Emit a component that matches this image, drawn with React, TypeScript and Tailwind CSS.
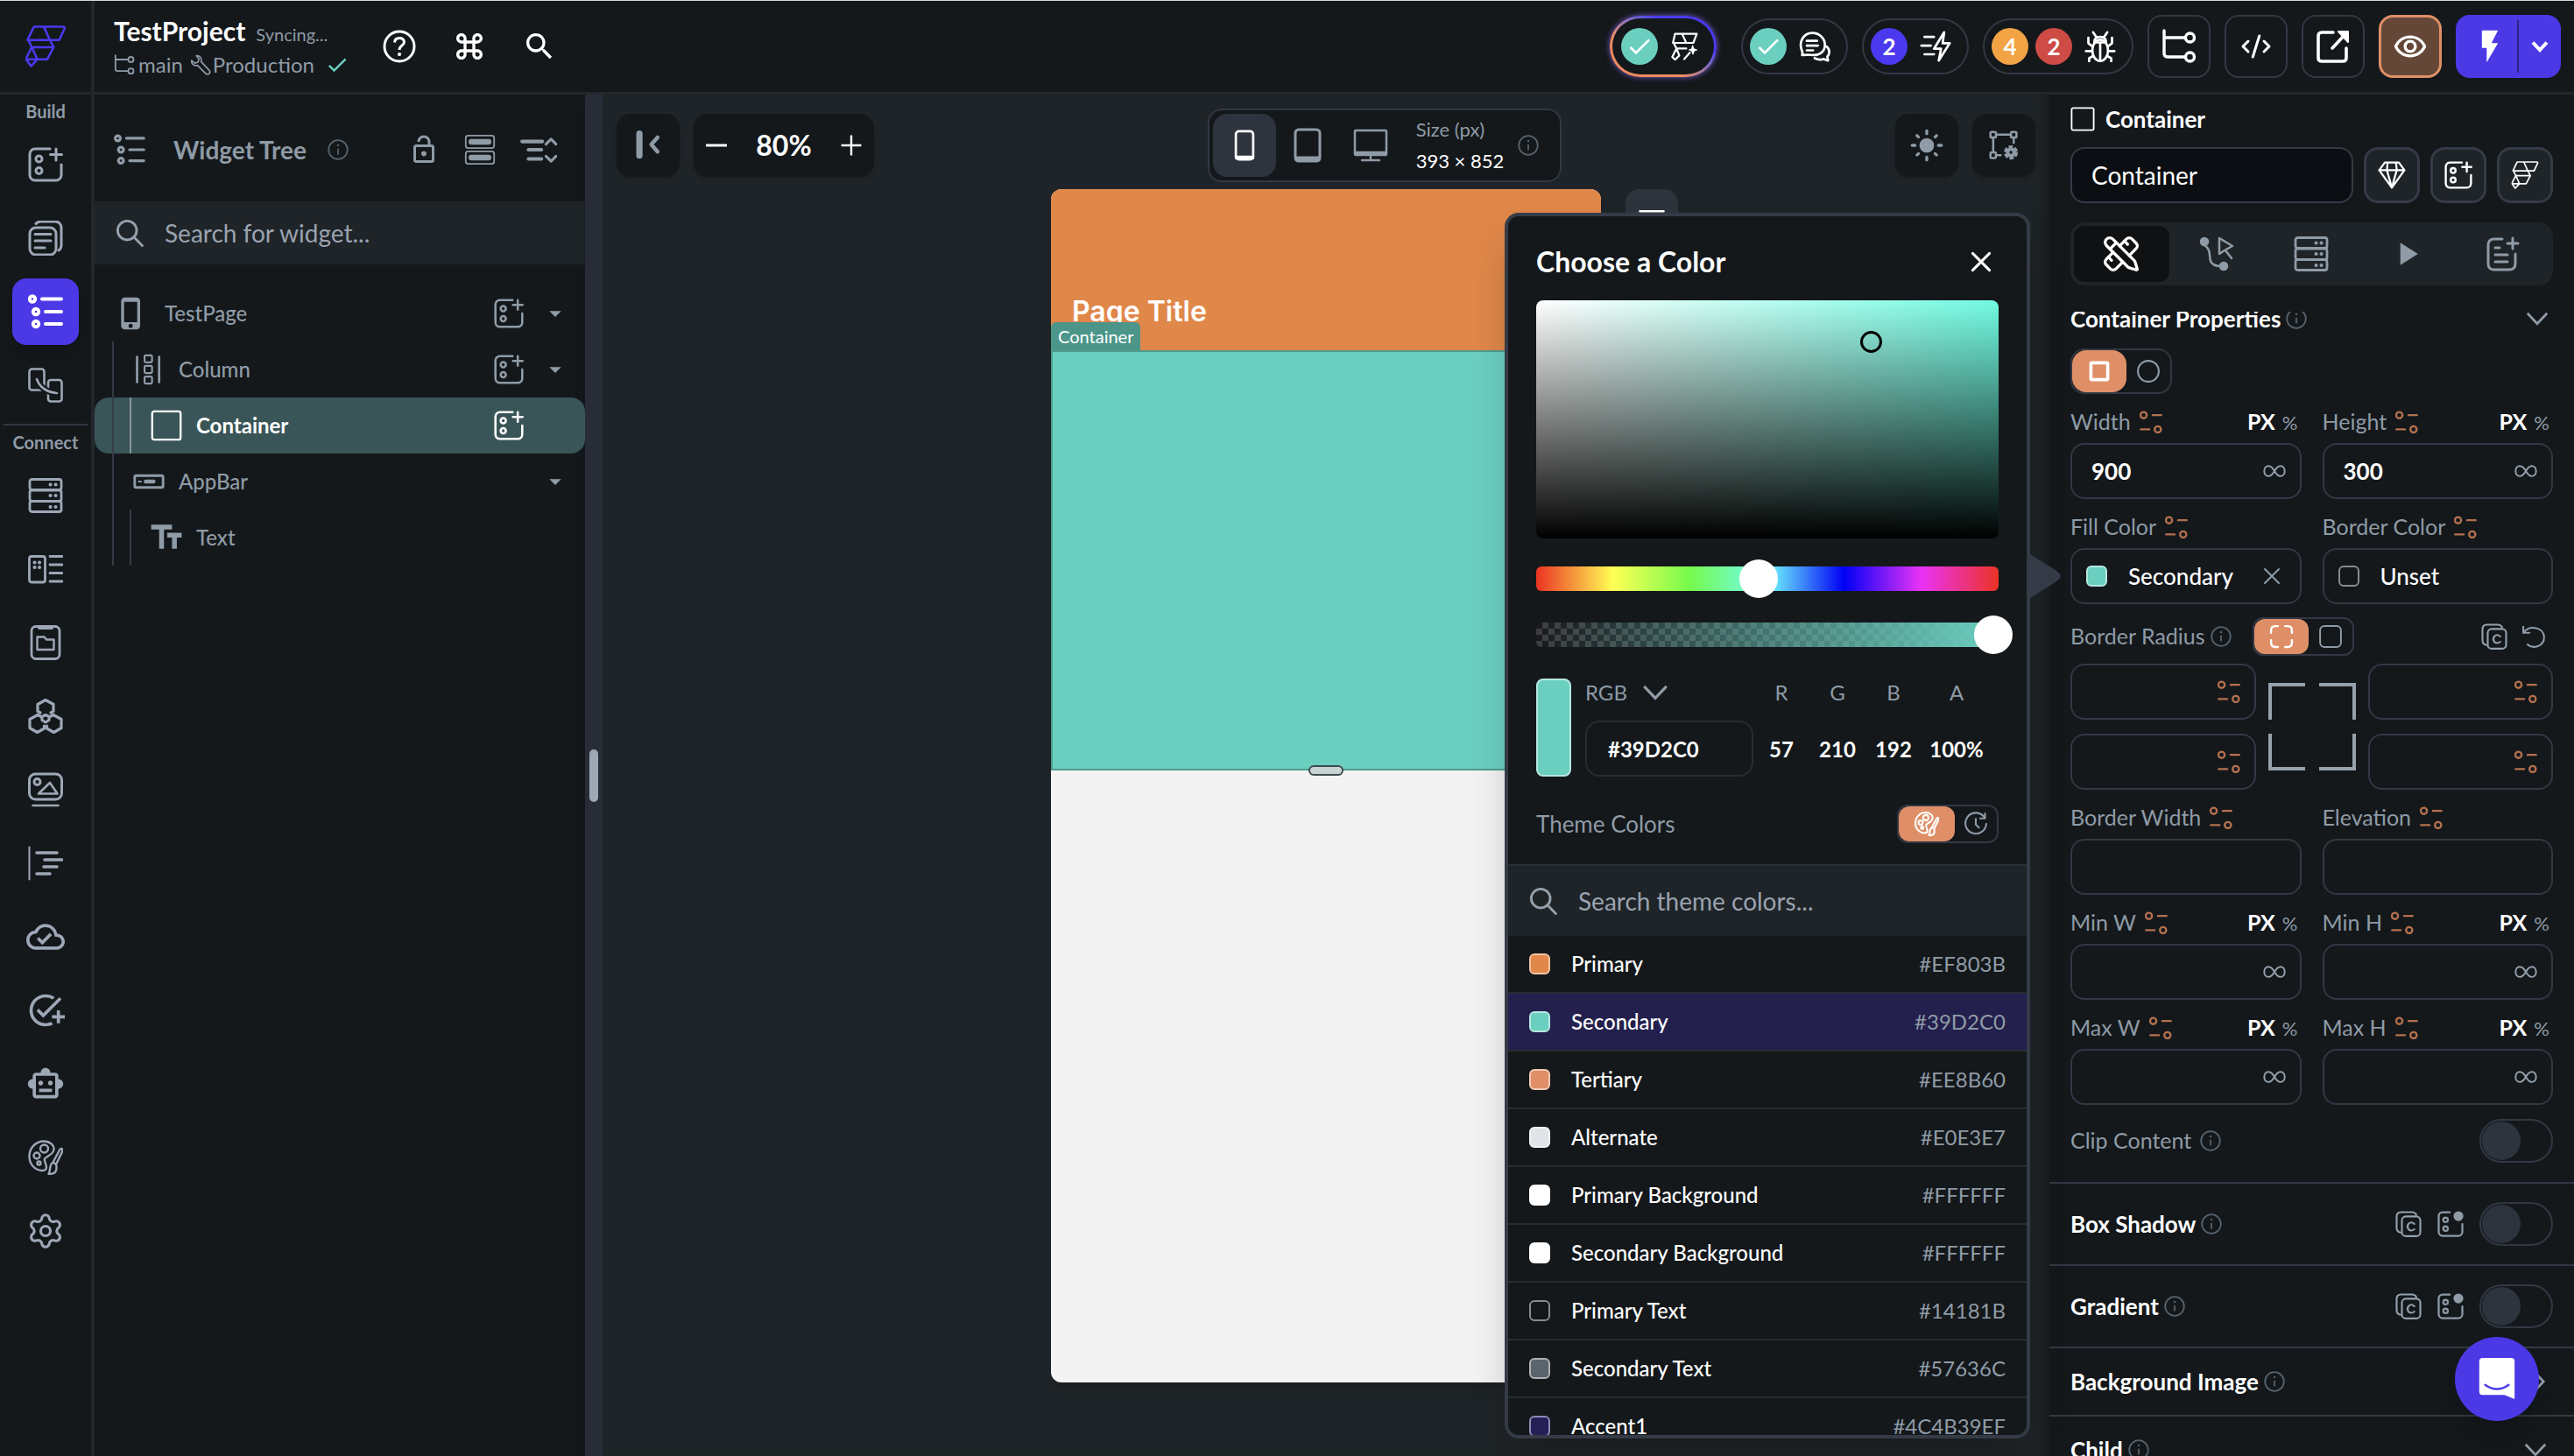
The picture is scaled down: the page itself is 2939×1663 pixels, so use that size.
import type { ReactNode } from "react";
import { CodeXml, PencilRuler, Settings } from "lucide-react";
import {
    MdArrowDropDown,
    MdCheck,
    MdFlashOn,
    MdKeyboardCommandKey,
    MdLightMode,
    MdOutlineAddTask,
    MdOutlineCloudDone,
    MdOutlineLockOpen,
    MdOutlineRemoveRedEye,
    MdOutlineSmartToy,
    MdPhoneIphone,
    MdPlayArrow,
    MdSearch,
    MdTextFields,
} from "react-icons/md";

type IconProps = { className?: string; width?: number };

// Base for the line icons, all drawn on a 40x40 grid
const Icon = ({ className = "size-10", width = 3, children }: IconProps & { children: ReactNode }) => (
    <svg viewBox="0 0 40 40" className={`shrink-0 ${className}`} fill="none" stroke="currentColor" strokeWidth={width} strokeLinecap="round" strokeLinejoin="round" aria-hidden="true">
        {children}
    </svg>
);

const Logo = ({ className = "size-12" }: IconProps) => (
    <svg viewBox="0 0 48 49" className={`shrink-0 ${className}`} fill="none" stroke="currentColor" strokeWidth={2.6} strokeLinejoin="round" aria-hidden="true">
        <path d="M10.5 1.5H44q3 0 2 2.5L40 17H3zM22 1.5 29 17M4 17l4 8.5h25.5L26 39.5H1.5L7 47.5l7.5-8-6.500-14L1.500 38M29 17l4.500 8.500" />
    </svg>
);

const AddWidgetIcon = ({ className }: IconProps) => (
    <Icon className={className}>
        <path d="M25 2H8a6 6 0 0 0-6 6v24a6 6 0 0 0 6 6h24a6 6 0 0 0 6-6V20M32 2v13M25.5 8.5h13" />
        <circle cx="12.5" cy="13.5" r="3.5" />
        <circle cx="12.5" cy="27" r="3.5" />
    </Icon>
);

const WidgetDotIcon = ({ className }: IconProps) => (
    <Icon className={className}>
        <path d="M19 2H8a6 6 0 0 0-6 6v24a6 6 0 0 0 6 6h24a6 6 0 0 0 6-6V20" />
        <circle cx="12.5" cy="13.5" r="3.5" />
        <circle cx="12.5" cy="27" r="3.5" />
        <circle cx="32" cy="8" r="6" fill="currentColor" />
    </Icon>
);

const PagesIcon = () => (
    <Icon>
        <rect x="2" y="8" width="30" height="31" rx="7" />
        <path d="M8 15.5h18M8 23h18M8 31h11M9 3.5Q11 1 15 1h16a7 7 0 0 1 7 7v20q0 4-3 6" />
    </Icon>
);

const TreeIcon = ({ className, width = 4 }: IconProps) => (
    <Icon className={className} width={width}>
        <circle cx="5" cy="5.5" r="3.2" />
        <circle cx="9" cy="20" r="3.2" />
        <circle cx="9" cy="34" r="3.2" />
        <path d="M16 5.5h22M20 20h18M20 34h18" />
    </Icon>
);

const StoryboardIcon = () => (
    <Icon width={2.6}>
        <rect x="1.5" y="1.5" width="17" height="24" rx="3" />
        <rect x="23" y="14" width="15.5" height="24.5" rx="3" />
        <path d="M10 13C14 24 22 28 33 29" className="stroke-[#14181b]" strokeWidth={7} />
        <path d="M10 13C14 24 22 28 33 29" />
    </Icon>
);

const DatabaseIcon = ({ className, width = 2.8 }: IconProps) => (
    <Icon className={className} width={width}>
        <rect x="2" y="1.5" width="36" height="12" rx="2.5" />
        <rect x="2" y="14" width="36" height="12.5" rx="2.5" />
        <rect x="2" y="26.5" width="36" height="12" rx="2.5" />
        <path d="M25.5 7.5h.1M31.5 7.5h.1M25.5 20h.1M31.5 20h.1M25.5 33h.1M31.5 33h.1" strokeWidth={4} />
    </Icon>
);

const DataTypesIcon = () => (
    <Icon width={2.8}>
        <rect x="1.5" y="5.5" width="18" height="29.5" rx="2.5" />
        <path d="M25 5.5h14M25 15h14M25 24.5h14M25 34h14" />
        <path d="M7.5 12.5h.1M13 12.5h.1M7.5 18h.1M13 18h.1" strokeWidth={4} />
    </Icon>
);

const StateIcon = () => (
    <Icon width={2.8}>
        <rect x="4" y="1.5" width="32" height="37" rx="5" />
        <path d="M13 3h14" strokeWidth={4} />
        <path d="M10.5 13.5h8l2.5 3h8.5v11.5h-19z" strokeWidth={2.4} />
    </Icon>
);

const HexIcon = () => (
    <Icon width={3.2}>
        <path d="M14 16 11 14.5V6.5L20 1.5l9 5v8L26 16M15 20.5l-4-2-9 5v10l8.500 5 8-4.500v-3M25 20.5l4-2 9 5v10l-8.500 5-8-4.500v-3" />
        <path d="m20 18.5 4 2v4L20 27l-4-2.500v-4z" />
    </Icon>
);

const MediaIcon = () => (
    <Icon>
        <rect x="1.5" y="2" width="37" height="29" rx="7" />
        <circle cx="10.5" cy="11" r="3.5" />
        <path d="M12 24.500 25 12l8.500 12.500zM5.500 38h29" strokeWidth={2.6} />
    </Icon>
);

const AutomationIcon = () => (
    <Icon>
        <path d="M1.5 1.5v37" strokeWidth={2} />
        <path d="M10 8h23M19 16h19.5M18 24h15M10 32h15" strokeWidth={3.6} />
    </Icon>
);

const PaletteIcon = ({ className, width = 2.4 }: IconProps) => (
    <Icon className={className} width={width}>
        <path d="M20 34C11 38 2 29 1.5 20 1 9 9 1.5 18 1.5c7 0 12 4.500 11.500 9.500-.500 6-8 7-10.500 10.500-1.500 3 4.500 9 1 12.500zM39 10.500q-1-1.500-3 1l-7.500 14 3.500 2.500 7-14.500q.600-1.500 0-3zM28 26c-4 2-2 9-4.500 13 5 0 9-2 9-6.500q0-4-.500-4.500" />
        <circle cx="18.5" cy="10" r="4.5" />
        <circle cx="10" cy="18" r="3.5" />
        <circle cx="12.5" cy="26.5" r="2" />
    </Icon>
);

const InfoIcon = ({ className = "" }: IconProps) => (
    <Icon className={`size-6 text-[#57636c] ${className}`}>
        <circle cx="20" cy="20" r="18" />
        <path d="M20 18v11" strokeLinecap="butt" />
        <path d="M20 11.5h.1" strokeWidth={4} />
    </Icon>
);

const ChevronDown = ({ className = "size-8", width = 4 }: IconProps) => (
    <Icon className={className} width={width}>
        <path d="m4 11 16 17L36 11" strokeLinecap="butt" strokeLinejoin="miter" />
    </Icon>
);

const ChevronRight = ({ className = "size-8", width = 4 }: IconProps) => (
    <Icon className={className} width={width}>
        <path d="m18 4 15 16-15 16" strokeLinecap="butt" strokeLinejoin="miter" />
    </Icon>
);

const CloseIcon = ({ className = "size-6", width = 4 }: IconProps) => (
    <Icon className={className} width={width}>
        <path d="M4 4l32 32M36 4 4 36" />
    </Icon>
);

const SearchIcon = ({ className = "size-8" }: IconProps) => (
    <Icon className={className} width={3.6}>
        <circle cx="16.5" cy="16.5" r="13.5" />
        <path d="m27 27 11 11" />
    </Icon>
);

const BranchIcon = ({ className, width = 3 }: IconProps) => (
    <Icon className={className} width={width}>
        <path d="M3 2v26q0 4 4 4h20M3 10h24" />
        <circle cx="32.5" cy="10" r="5" />
        <circle cx="32.5" cy="32" r="5" />
    </Icon>
);

const SquareIcon = ({ className }: IconProps) => (
    <Icon className={className} width={2.6}>
        <rect x="2" y="2" width="36" height="36" rx="2.5" />
    </Icon>
);

// Marks a property that can be bound to a variable
const BindIcon = () => (
    <Icon className="size-[26px] text-[#b4714f]" width={3.6}>
        <circle cx="7" cy="8" r="5.5" />
        <circle cx="32" cy="33" r="5.5" />
        <path d="M23 8h15M2 33h15" />
    </Icon>
);

const InfinityIcon = () => (
    <Icon className="size-[26px] text-[#95a1ac]">
        <path d="M20 20c-4-7-7-9-10.500-9C5 11 2 15 2 20s3 9 7.500 9c3.500 0 6.500-2 10.500-9s7-9 10.500-9C35 11 38 15 38 20s-3 9-7.500 9c-3.500 0-6.500-2-10.500-9z" />
    </Icon>
);

const CopyIcon = () => (
    <Icon className="size-[30px] text-[#95a1ac]" width={2.8}>
        <rect x="10" y="8.5" width="28" height="30" rx="6" />
        <path d="M8 33q-6-1-6-7V9q0-7 7-7h16q5 0 7 4M29 20q-5-4.500-9 0-3 4 0 8 4 4 9 0" />
    </Icon>
);

const GemIcon = () => (
    <Icon className="size-8" width={2.8}>
        <path d="M10 2h20l8 11-18 25L2 13zM2 13h36M14 2l-1 11 7 25 7-25-1-11" />
    </Icon>
);

const WandIcon = () => (
    <Icon className="size-8" width={2.8}>
        <path d="M7 2h31l-5 13H4zM17 2l6 13M5 15l4 8h14M9 23 3 35l4 4 6-6zM20 38l8-9" />
        <path d="m32 19 1.500 4.500L38 25l-4 1.500L32.500 31 31 26.500 27 25l4-1.500z" fill="currentColor" strokeWidth={1.5} />
    </Icon>
);

const ChatIcon = () => (
    <Icon className="size-9" width={3}>
        <path d="M4 31q1-3 0-5C-1 14 6 3 17 3c9 0 16 7 16 15 0 9-7 13-14 13-4 0-6-1-15 0zM10 13h13M10 19h14M10 25h8M35 20c5 4 4 10 1 13l1 5-6-2q-5 2-11-1" />
    </Icon>
);

const ActionIcon = () => (
    <Icon className="size-9" width={3}>
        <path d="M31 2 18 23h9l-3 15 14-22h-9zM6 8h12M2 19h12M6 30h12" />
    </Icon>
);

const BugIcon = () => (
    <Icon className="size-9" width={3}>
        <ellipse cx="20" cy="25" rx="10" ry="13.5" />
        <path d="M12.500 15q0-7 7.500-7t7.500 7zM20 15v23M15 8l-4-6M25 8l4-6M10 20l-5-4V9M30 20l5-4V9M10 26H2M30 26h8M11.500 32 6 35v4M28.500 32l5.500 3v4" />
    </Icon>
);

const OpenIcon = () => (
    <Icon className="size-10" width={3.6}>
        <path d="M20 4H7q-4 0-4 4v25q0 4 4 4h24q4 0 4-4V22M19 22 34 6" />
        <path d="M26 3h11v12z" fill="currentColor" strokeWidth={2} />
    </Icon>
);

const HelpIcon = () => (
    <Icon className="size-10">
        <circle cx="20" cy="20" r="17" />
        <path d="M14.500 15.500q.500-5 5.500-5t5.500 4.500c0 4-5.500 4-5.500 9" strokeLinecap="butt" />
        <path d="M20 29h.1" strokeWidth={4} />
    </Icon>
);

const muted = "text-[#8f9ba6]";
const fieldBox = "flex h-16 w-full min-w-0 items-center rounded-2xl border-2 border-[#323843]";

const Header = () => (
    <header className="flex h-[108px] shrink-0 items-stretch border-t border-b-[3px] border-t-[#cfdcda] border-b-[#22272b]">
        <div className="flex w-[108px] shrink-0 items-center justify-center border-r-4 border-[#22272b] text-[#4b39ef]">
            <Logo />
        </div>
        <div className="flex flex-1 items-center pl-5.5">
            <div className="flex w-[306px] flex-col gap-1">
                <div className="flex items-baseline gap-3">
                    <h1 className="text-[30px] leading-9 font-bold">TestProject</h1>
                    <span className={`text-[20px] ${muted}`}>Syncing...</span>
                </div>
                <div className={`flex items-center text-[24px] leading-8 ${muted}`}>
                    <BranchIcon className="mr-1 size-6" />
                    main
                    <Icon className="mr-0.5 ml-2 size-6" width={2.8}>
                        <path d="M12 3c6-1 11 4 9 11l16 17q2 4-1 6-3 2-6 0L14 21C7 23 2 18 3 12l6 5 6-2 2-6z" />
                    </Icon>
                    Production
                    <MdCheck className="ml-3 size-7 text-[#6bcfc0]" />
                </div>
            </div>
            <div className="flex items-center gap-10">
                <button aria-label="Help"><HelpIcon /></button>
                <button aria-label="Commands"><MdKeyboardCommandKey className="size-10" /></button>
                <button aria-label="Search"><MdSearch className="size-10" /></button>
            </div>
        </div>
        <div className="flex items-center gap-4 pr-[15px]">
            <button aria-label="AI assistant" className="mr-3 rounded-full bg-linear-to-tr from-[#ee8b60] from-35% to-[#4b39ef] to-70% p-[3px] shadow-[0_0_6px_#7a5ad0]">
                <span className="flex h-16 w-29 items-center gap-3.5 rounded-full bg-[#14181b] pl-2.5">
                    <Badge className="bg-[#6bcfc0]"><MdCheck className="size-8" /></Badge>
                    <WandIcon />
                </span>
            </button>
            <Pill label="Comments" icon={<ChatIcon />}>
                <Badge className="bg-[#6bcfc0]"><MdCheck className="size-8" /></Badge>
            </Pill>
            <Pill label="Actions" icon={<ActionIcon />}>
                <Badge className="bg-[#4b39ef]">2</Badge>
            </Pill>
            <Pill label="Issues" icon={<BugIcon />}>
                <Badge className="bg-[#f2a445]">4</Badge>
                <Badge className="bg-[#cf4b45]">2</Badge>
            </Pill>
            <ToolButton label="Branches"><BranchIcon className="size-10" width={3.4} /></ToolButton>
            <ToolButton label="Code"><CodeXml className="size-9" strokeWidth={2} /></ToolButton>
            <ToolButton label="Open"><OpenIcon /></ToolButton>
            <button aria-label="Preview" className="flex size-18 items-center justify-center rounded-2xl border-[3px] border-[#df8f68] bg-[#644737]">
                <MdOutlineRemoveRedEye className="size-10" />
            </button>
            <div className="flex h-18 w-30 items-center rounded-2xl bg-[#4b39e6]">
                <button aria-label="Run" className="flex flex-1 justify-center pl-2"><MdFlashOn className="size-11" /></button>
                <span className="h-15 w-0.5 bg-[#2b2480]" />
                <button aria-label="Run options" className="flex w-12 justify-center"><ChevronDown className="size-5" width={8} /></button>
            </div>
        </div>
    </header>
);

const Badge = ({ className, children }: { className: string; children: ReactNode }) => (
    <span className={`flex size-[42px] shrink-0 items-center justify-center rounded-full text-[26px] font-bold ${className}`}>{children}</span>
);

const Pill = ({ label, icon, children }: { label: string; icon: ReactNode; children: ReactNode }) => (
    <button aria-label={label} className="flex h-16 items-center gap-2 rounded-full border-2 border-[#323843] pr-4.5 pl-2">
        {children}
        <span className="ml-1.5">{icon}</span>
    </button>
);

const ToolButton = ({ label, children }: { label: string; children: ReactNode }) => (
    <button aria-label={label} className="flex size-18 items-center justify-center rounded-2xl border-2 border-[#323843]">{children}</button>
);

const RailItem = ({ label, active, children }: { label: string; active?: boolean; children: ReactNode }) => (
    <div className="flex h-[84px] shrink-0 items-center justify-center">
        <button aria-label={label} className={`flex size-[76px] items-center justify-center rounded-2xl ${active ? "bg-[#4b39e6] text-white shadow-lg" : ""}`}>
            {children}
        </button>
    </div>
);

const RailTitle = ({ children }: { children: ReactNode }) => (
    <span className={`flex h-[38px] shrink-0 items-center justify-center text-[20px] font-bold ${muted}`}>{children}</span>
);

const Rail = () => (
    <nav className="flex w-[108px] shrink-0 flex-col overflow-hidden border-r-4 border-[#22272b] text-[#9ea7b6]">
        <RailTitle>Build</RailTitle>
        <RailItem label="Add widget"><AddWidgetIcon /></RailItem>
        <RailItem label="Pages"><PagesIcon /></RailItem>
        <RailItem label="Widget tree" active><TreeIcon /></RailItem>
        <RailItem label="Storyboard"><StoryboardIcon /></RailItem>
        <hr className="mx-1 mt-0.5 border-t-2 border-[#323843]" />
        <RailTitle>Connect</RailTitle>
        <RailItem label="Firestore"><DatabaseIcon /></RailItem>
        <RailItem label="Data types"><DataTypesIcon /></RailItem>
        <RailItem label="App state"><StateIcon /></RailItem>
        <RailItem label="API calls"><HexIcon /></RailItem>
        <RailItem label="Media"><MediaIcon /></RailItem>
        <RailItem label="Custom code"><AutomationIcon /></RailItem>
        <RailItem label="Cloud functions"><MdOutlineCloudDone className="size-11" /></RailItem>
        <RailItem label="Tests"><MdOutlineAddTask className="size-11" /></RailItem>
        <RailItem label="Agents"><MdOutlineSmartToy className="size-11" /></RailItem>
        <RailItem label="Theme"><PaletteIcon /></RailItem>
        <RailItem label="Settings"><Settings className="size-11" strokeWidth={1.7} /></RailItem>
    </nav>
);

const TreePanel = () => (
    <aside className="flex w-[560px] shrink-0 flex-col">
        <div className={`flex h-[122px] items-center pt-1 pr-8 pl-5.5 ${muted}`}>
            <TreeIcon className="size-9" width={3.6} />
            <h2 className="ml-8 text-[28px] font-bold">Widget Tree</h2>
            <InfoIcon className="ml-6" />
            <div className="ml-auto flex items-center gap-7">
                <button aria-label="Unlock"><MdOutlineLockOpen className="size-9" /></button>
                <button aria-label="Layout">
                    <Icon className="size-9" width={2}>
                        <rect x="2" y="2" width="36" height="16" rx="3" />
                        <rect x="2" y="22" width="36" height="16" rx="3" />
                        <path d="M9 10h22M9 30h22" strokeWidth={7} />
                    </Icon>
                </button>
                <button aria-label="Collapse all">
                    <Icon className="size-[42px]" width={4}>
                        <path d="M2 11h22M9 20h14M9 30h14" />
                        <path d="m28 14 5.500-5.500L39 14M28 27l5.500 5.500L39 27" strokeWidth={3} />
                    </Icon>
                </button>
            </div>
        </div>
        <label className="flex h-18 shrink-0 items-center gap-6 bg-[#1f2428] px-6 text-[#95a1ac]">
            <SearchIcon />
            <input placeholder="Search for widget..." className="w-full bg-transparent text-[28px] outline-none placeholder:text-[#9aa3b0]" />
        </label>
        <ul className={`relative mt-6 text-[24px] ${muted}`}>
            <TreeRow name="TestPage" className="gap-4.5 pl-5.5" icon={<MdPhoneIphone className="size-10" />} add caret />
            <TreeRow name="Column" className="gap-4 pl-11" add caret icon={
                <Icon className="size-9">
                    <path d="M5 4v32M33 4v32" />
                    <rect x="14.5" y="2" width="9.5" height="9" rx="1.5" strokeWidth={2.4} />
                    <rect x="14.5" y="15.5" width="9.5" height="9" rx="1.5" strokeWidth={2.4} />
                    <rect x="14.5" y="29" width="9.5" height="9" rx="1.5" strokeWidth={2.4} />
                </Icon>
            } />
            <TreeRow name="Container" className="gap-4 pl-16" icon={<SquareIcon className="size-9" />} add selected />
            <TreeRow name="AppBar" className="gap-4 pl-11" caret icon={
                <Icon className="size-9" width={3.2}>
                    <rect x="2" y="12.5" width="36" height="15" rx="2" />
                    <path d="M16 20h10" strokeWidth={5} />
                    <path d="M7 20h3" strokeWidth={2} />
                </Icon>
            } />
            <TreeRow name="Text" className="gap-3 pl-15" icon={<MdTextFields className="size-11" />} />
            <li aria-hidden="true" className="absolute top-16 bottom-0 left-5 w-0.5 bg-[#353b46]" />
            <li aria-hidden="true" className="absolute top-32 left-10 h-16 w-0.5 bg-[#87969a]" />
            <li aria-hidden="true" className="absolute bottom-0 left-10 h-16 w-0.5 bg-[#353b46]" />
        </ul>
    </aside>
);

type TreeRowProps = { name: string; className: string; icon: ReactNode; add?: boolean; caret?: boolean; selected?: boolean };

const TreeRow = ({ name, className, icon, add, caret, selected }: TreeRowProps) => (
    <li className={`flex h-16 items-center pr-3 ${selected ? "rounded-2xl bg-[#3a5557] font-bold text-white" : "font-medium"}`}>
        <button className={`flex flex-1 items-center text-left ${className}`}>
            {icon}
            {name}
        </button>
        {add && <button aria-label={`Add to ${name}`} className="mr-3.5"><AddWidgetIcon className="size-[34px]" /></button>}
        <span className="flex w-11 justify-center">
            {caret && <button aria-label={`Collapse ${name}`}><MdArrowDropDown className="size-8" /></button>}
        </span>
    </li>
);

const canvasButton = "flex size-18 items-center justify-center rounded-2xl bg-[#14181b] shadow-md";

const Canvas = () => (
    <main className="relative flex min-w-0 flex-1 flex-col bg-[#1f2428] shadow-[inset_-14px_0_14px_-10px_#15191c]">
        <div className="flex items-center justify-between px-4 pt-4">
            <div className="flex items-center gap-4">
                <button aria-label="Hide panel" className={`${canvasButton} ${muted}`}>
                    <Icon className="size-9" width={5}>
                        <path d="M9 5v28" strokeWidth={8} />
                        <path d="m32 10-8 9 8 9" />
                    </Icon>
                </button>
                <div className="flex h-18 w-[206px] items-center justify-between rounded-2xl bg-[#14181b] px-3.5 shadow-md">
                    <button aria-label="Zoom out"><Icon className="size-6" width={5}><path d="M0 20h40" strokeLinecap="butt" /></Icon></button>
                    <span className="text-[32px] font-bold">80%</span>
                    <button aria-label="Zoom in"><Icon className="size-6" width={4}><path d="M1 20h38M20 1v38" strokeLinecap="butt" /></Icon></button>
                </div>
            </div>
            <div className={`flex h-21 items-center rounded-2xl border-2 border-[#323843] bg-[#14181b] px-1 ${muted}`}>
                <button aria-label="Phone" className="flex size-18 items-center justify-center rounded-2xl bg-[#2e343e] text-white">
                    <Icon className="size-9" width={3}>
                        <rect x="9" y="2" width="22" height="36" rx="4" />
                        <path d="M10 35.5h20" strokeWidth={5} />
                    </Icon>
                </button>
                <button aria-label="Tablet" className="flex size-18 items-center justify-center">
                    <Icon className="size-10" width={3}>
                        <rect x="6" y="2" width="28" height="36" rx="4" />
                        <path d="M8 35.5h24" strokeWidth={6} />
                    </Icon>
                </button>
                <button aria-label="Desktop" className="flex size-18 items-center justify-center">
                    <Icon className="size-10" width={2.5}>
                        <rect x="2" y="3" width="36" height="28" rx="1" />
                        <path d="M3 29h34" strokeWidth={4.5} />
                        <path d="M20 31v5M10 37h20" />
                    </Icon>
                </button>
                <div className="ml-4 flex flex-col gap-1 text-[22px] leading-8">
                    <span>Size (px)</span>
                    <span className="text-white">393 × 852</span>
                </div>
                <InfoIcon className="mr-5 ml-4" />
            </div>
            <div className={`flex items-center gap-4 ${muted}`}>
                <button aria-label="Light mode" className={canvasButton}><MdLightMode className="size-10" /></button>
                <button aria-label="Canvas settings" className={canvasButton}>
                    <Icon className="size-9" width={2.8}>
                        <rect x="3" y="3" width="7" height="7" rx="1.5" />
                        <rect x="29" y="3" width="7" height="7" rx="1.5" />
                        <rect x="3" y="29" width="7" height="7" rx="1.5" />
                        <path d="M10 6.5h19M6.5 10v19M10 32.5h6M32.5 10v7" />
                        <circle cx="29" cy="29" r="6.5" strokeWidth={5} strokeDasharray="4.8 2" strokeLinecap="butt" />
                        <circle cx="29" cy="29" r="4.2" strokeWidth={4.5} />
                    </Icon>
                </button>
            </div>
        </div>
        <div className="relative mx-auto mt-2 h-[1363px] w-[628px] shrink-0">
            <section className="flex h-full flex-col overflow-hidden rounded-xl bg-[#f3f3f3] shadow-lg">
                <div className="flex h-46 items-end bg-[#e0874a] px-6 pb-5 font-['Inter',sans-serif] text-[32px] font-semibold">Page Title</div>
                <div className="relative h-120 border-2 border-[#4e9c8f] bg-[#6bcfc0]">
                    <span className="absolute bottom-full -left-0.5 mb-0.5 flex h-8 items-center rounded-t-md bg-[#4b9689] px-2 text-[20px]">Container</span>
                    <span className="absolute -bottom-2 left-1/2 h-3 w-10 -translate-x-1/2 rounded-full border-2 border-[#3d4a50] bg-[#c9d3d4]" />
                </div>
            </section>
            <button aria-label="Page menu" className="absolute top-0 left-full ml-7 flex size-15 items-center justify-center rounded-2xl bg-[#2e343c]">
                <Icon className="size-8"><path d="M3 14h34M3 27h34" /></Icon>
            </button>
        </div>
        <ColorPicker />
    </main>
);

const themeColors = [
    { name: "Primary", hex: "#EF803B", swatch: "bg-[#e0874a] border-[#f3c3a3]" },
    { name: "Secondary", hex: "#39D2C0", swatch: "bg-[#6bcfc0] border-[#b5e7e0]", selected: true },
    { name: "Tertiary", hex: "#EE8B60", swatch: "bg-[#df8f68] border-[#f3c8b5]" },
    { name: "Alternate", hex: "#E0E3E7", swatch: "bg-[#e0e3e7] border-[#f0f1f3]" },
    { name: "Primary Background", hex: "#FFFFFF", swatch: "bg-white border-white" },
    { name: "Secondary Background", hex: "#FFFFFF", swatch: "bg-white border-white" },
    { name: "Primary Text", hex: "#14181B", swatch: "bg-[#14181b] border-[#898b8d]" },
    { name: "Secondary Text", hex: "#57636C", swatch: "bg-[#59646c] border-[#abb1b5]" },
    { name: "Accent1", hex: "#4C4B39EF", swatch: "bg-[#242056] border-[#8f8bb5]" },
];

const sliderInput = "-mx-4 h-11 w-[calc(100%+32px)] appearance-none bg-transparent [&::-webkit-slider-thumb]:size-11 [&::-webkit-slider-thumb]:appearance-none [&::-webkit-slider-thumb]:rounded-full [&::-webkit-slider-thumb]:bg-white";

const Channel = ({ name, value, className }: { name: string; value: string; className: string }) => (
    <label className={`flex flex-col items-center justify-between ${className}`}>
        <span className={`h-8 text-[24px] leading-8 ${muted}`}>{name}</span>
        <input defaultValue={value} className="h-16 w-full bg-transparent text-center text-[24px] font-bold outline-none" />
    </label>
);

const ColorPicker = () => (
    <div role="dialog" aria-label="Choose a Color" className="absolute top-[135px] right-[22px] bottom-5 w-150">
        <span className="absolute top-[390px] left-full h-[50px] w-9 bg-[#353b46] [clip-path:polygon(0_0,80%_36%,96%_46%,96%_54%,80%_64%,0_100%)]" />
        <div className="flex h-full flex-col overflow-hidden rounded-2xl border-4 border-[#353b46] bg-[#14181b] shadow-2xl">
            <div className="flex shrink-0 flex-col px-8">
                <div className="flex h-24 items-center justify-between pt-2">
                    <h2 className="text-[32px] font-bold">Choose a Color</h2>
                    <button aria-label="Close" className="flex size-10 items-center justify-center"><CloseIcon width={5} /></button>
                </div>
                <div className="relative h-[272px] rounded-lg bg-[linear-gradient(to_top,#000,transparent),linear-gradient(to_right,#fff,#72fbe2)]">
                    <span className="absolute top-[13%] left-[70%] size-[25px] rounded-full border-3 border-black" />
                </div>
                <div className="mt-6 grid items-center *:col-start-1 *:row-start-1">
                    <div className="h-7 rounded-md bg-[linear-gradient(to_right,#eb3323,#ffff55_16.6%,#75fb4c_33.3%,#73fbfd_50%,#0000f5_66.6%,#ea33f7_83.3%,#eb3323)]" />
                    <input type="range" aria-label="Hue" min={0} max={360} defaultValue={173} className={sliderInput} />
                </div>
                <div className="mt-5 grid items-center *:col-start-1 *:row-start-1">
                    <div className="h-7 rounded-md bg-[linear-gradient(to_right,transparent,#6bcfc0),repeating-conic-gradient(#3b3d3e_0_25%,#1b181f_0_50%)] bg-[length:auto,14px_14px]" />
                    <input type="range" aria-label="Opacity" min={0} max={100} defaultValue={100} className={sliderInput} />
                </div>
                <div className="mt-7 flex h-28">
                    <span className="w-10 rounded-lg border-2 border-[#b5e7e0] bg-[#6bcfc0]" />
                    <div className="ml-4 flex w-48 flex-col justify-between">
                        <label className={`relative flex h-8 w-24 items-center ${muted}`}>
                            <select aria-label="Color model" className="w-full appearance-none bg-transparent text-[24px] outline-none">
                                <option>RGB</option>
                            </select>
                            <ChevronDown className="pointer-events-none absolute right-0 size-8" />
                        </label>
                        <input aria-label="Hex value" defaultValue="#39D2C0" className="h-16 rounded-2xl border-2 border-[#272c34] bg-transparent px-6 text-[24px] font-bold outline-none" />
                    </div>
                    <Channel name="R" value="57" className="w-16" />
                    <Channel name="G" value="210" className="w-16" />
                    <Channel name="B" value="192" className="w-16" />
                    <Channel name="A" value="100%" className="w-20" />
                </div>
                <div className="mt-8 mb-6 flex items-center justify-between">
                    <span className={`text-[26px] leading-10 ${muted}`}>Theme Colors</span>
                    <div className={`flex h-11 w-29 rounded-xl border-2 border-[#323843] ${muted}`}>
                        <button aria-label="Theme colors" className="flex w-16 items-center justify-center rounded-xl bg-[#df8f68] text-white"><PaletteIcon className="size-7" width={3} /></button>
                        <button aria-label="Recent colors" className="flex flex-1 items-center justify-center">
                            <Icon className="size-7" width={3}>
                                <path d="M33 8A17 17 0 1 0 37 20M35 3v8h-8M20 12v9l5 5" />
                            </Icon>
                        </button>
                    </div>
                </div>
            </div>
            <label className="flex h-[82px] shrink-0 items-center gap-6 border-t-2 border-[#2a2f34] bg-[#1f2428] px-6 text-[#95a1ac]">
                <SearchIcon />
                <input placeholder="Search theme colors..." className="w-full bg-transparent text-[28px] outline-none placeholder:text-[#9aa3b0]" />
            </label>
            <ul className="min-h-0 flex-1 overflow-hidden">
                {themeColors.map(({ name, hex, swatch, selected }) => (
                    <li key={name} className={`border-b-2 border-[#272c31] ${selected ? "bg-[#24204e]" : ""}`}>
                        <button className="flex h-16 w-full items-center px-6 text-[24px]">
                            <span className={`mr-6 size-6 rounded-md border-2 ${swatch}`} />
                            <span className="font-medium">{name}</span>
                            <span className={`ml-auto ${muted}`}>{hex}</span>
                        </button>
                    </li>
                ))}
            </ul>
        </div>
    </div>
);

const tabs = [
    { label: "Properties", icon: <PencilRuler className="size-11 -scale-x-100" strokeWidth={1.8} /> },
    {
        label: "Actions",
        icon: (
            <Icon className="size-10" width={2.5}>
                <circle cx="6" cy="6" r="4" fill="currentColor" />
                <circle cx="28" cy="34" r="4" fill="currentColor" />
                <path d="M6 10c8 5 5 12 7 18q2 6 12 6M23 2v18l6-4 9-5zM30 16l7 9" />
            </Icon>
        ),
    },
    { label: "Backend", icon: <DatabaseIcon className="size-10" /> },
    { label: "Animations", icon: <MdPlayArrow className="size-11" /> },
    {
        label: "Notes",
        icon: (
            <Icon className="size-10">
                <path d="M20 3h-9Q4 3 4 10v21q0 7 7 7h17q7 0 7-7V20M32 2v12M26 8h12M12 13h5M12 21h14M12 29h14" />
            </Icon>
        ),
    },
];

const Units = () => (
    <span className="ml-auto flex items-center gap-2 pr-1">
        <button className="font-bold text-white">PX</button>
        <button className="text-[22px]">%</button>
    </span>
);

type FieldProps = { label: string; value?: string; units?: boolean };

const Field = ({ label, value, units }: FieldProps) => {
    const id = label.toLowerCase().replace(" ", "-");
    return (
        <div className="min-w-0">
            <div className={`flex h-12 items-center gap-2.5 text-[25px] ${muted}`}>
                <label htmlFor={id}>{label}</label>
                <BindIcon />
                {units && <Units />}
            </div>
            <div className={`${fieldBox} pr-4 pl-5.5`}>
                <input id={id} defaultValue={value} className="w-full min-w-0 bg-transparent text-[26px] font-bold outline-none" />
                {units && <InfinityIcon />}
            </div>
        </div>
    );
};

const ColorField = ({ label, value, swatch, clearable }: { label: string; value: string; swatch: string; clearable?: boolean }) => (
    <div className="min-w-0">
        <div className={`flex h-12 items-center gap-2.5 text-[25px] ${muted}`}>
            {label}
            <BindIcon />
        </div>
        <div className={`${fieldBox} px-4`}>
            <button className="flex flex-1 items-center gap-6 text-left text-[26px] font-medium">
                <span className={`size-6 rounded-md border-2 ${swatch}`} />
                {value}
            </button>
            {clearable && <button aria-label="Clear color" className={`px-1.5 ${muted}`}><CloseIcon className="size-5" /></button>}
        </div>
    </div>
);

const RadiusInput = ({ label }: { label: string }) => (
    <div className={`${fieldBox} pr-4 pl-5`}>
        <input aria-label={label} className="w-full min-w-0 bg-transparent text-[26px] outline-none" />
        <BindIcon />
    </div>
);

const Switch = ({ label }: { label: string }) => (
    <input type="checkbox" aria-label={label} className="flex h-[50px] w-21 shrink-0 appearance-none items-center rounded-full border-2 border-[#323843] px-px before:size-11 before:rounded-full before:bg-[#2e343e]" />
);

const Corners = () => (
    <div className="grid size-25 grid-cols-2 gap-4 self-center">
        <span className="border-t-4 border-l-4 border-[#95a1ac]" />
        <span className="border-t-4 border-r-4 border-[#95a1ac]" />
        <span className="border-b-4 border-l-4 border-[#95a1ac]" />
        <span className="border-r-4 border-b-4 border-[#95a1ac]" />
    </div>
);

const squareButton = "flex size-16 shrink-0 items-center justify-center rounded-2xl border-[3px] border-[#353b46] bg-[#1f2428]";

const PropertiesPanel = () => (
    <aside className="flex w-[599px] shrink-0 flex-col overflow-hidden">
        <div className="px-6">
            <div className="flex h-14 items-center gap-3 text-[26px] font-bold">
                <SquareIcon className="size-7" />
                Container
            </div>
            <div className="mt-1 flex gap-3">
                <input aria-label="Widget name" defaultValue="Container" className="h-16 min-w-0 flex-1 rounded-2xl border-2 border-[#353b46] bg-[#0b0f13] px-5.5 text-[28px] outline-none" />
                <button aria-label="Theme widget" className={squareButton}><GemIcon /></button>
                <button aria-label="Create component" className={squareButton}><AddWidgetIcon className="size-8" /></button>
                <button aria-label="Open in editor" className={squareButton}><Logo className="size-8" /></button>
            </div>
            <div className={`mt-5.5 grid h-18 grid-cols-5 rounded-2xl bg-[#1f2428] p-1 ${muted}`}>
                {tabs.map(({ label, icon }, i) => (
                    <button key={label} aria-label={label} className={`flex items-center justify-center rounded-xl ${i === 0 ? "bg-[#0f1113] text-white" : ""}`}>
                        {icon}
                    </button>
                ))}
            </div>
        </div>
        <div className="mt-7.5 min-h-0 flex-1 overflow-hidden">
            <div className="-mt-6 px-6">
                <div className="flex h-16 items-center text-[26px] font-bold">
                    Container Properties
                    <InfoIcon className="ml-1.5" />
                    <button aria-label="Collapse section" className={`mr-1 ml-auto ${muted}`}><ChevronDown className="size-7" /></button>
                </div>
                <div className={`mt-0.5 flex h-13 w-29 rounded-2xl border-2 border-[#323843] ${muted}`}>
                    <button aria-label="Rectangle" className="flex w-[62px] items-center justify-center rounded-2xl bg-[#df8f68] text-white">
                        <Icon className="size-6" width={6}><rect x="4" y="4" width="32" height="32" rx="2" /></Icon>
                    </button>
                    <button aria-label="Circle" className="flex flex-1 items-center justify-center">
                        <Icon className="size-7"><circle cx="20" cy="20" r="17" /></Icon>
                    </button>
                </div>
                <div className="mt-2 grid grid-cols-2 gap-x-6 gap-y-2">
                    <Field label="Width" value="900" units />
                    <Field label="Height" value="300" units />
                    <ColorField label="Fill Color" value="Secondary" swatch="bg-[#6bcfc0] border-[#b5e7e0]" clearable />
                    <ColorField label="Border Color" value="Unset" swatch="border-[#898b8d]" />
                </div>
                <div className={`mt-2 flex h-15 items-center pb-0.5 text-[25px] ${muted}`}>
                    Border Radius
                    <InfoIcon className="ml-1.5" />
                    <div className="ml-6 flex h-11 w-29 rounded-xl border-2 border-[#323843]">
                        <button aria-label="Separate corners" className="flex w-[62px] items-center justify-center rounded-xl bg-[#df8f68] text-white">
                            <Icon className="size-7" width={3.5}>
                                <path d="M3 14v-4q0-7 7-7h4M26 3h4q7 0 7 7v4M37 26v4q0 7-7 7h-4M14 37h-4q-7 0-7-7v-4" />
                            </Icon>
                        </button>
                        <button aria-label="All corners" className="flex flex-1 items-center justify-center">
                            <Icon className="size-7" width={2.8}><rect x="3" y="3" width="34" height="34" rx="7" /></Icon>
                        </button>
                    </div>
                    <button aria-label="Copy" className="ml-auto"><CopyIcon /></button>
                    <button aria-label="Reset" className="mr-2 ml-4">
                        <Icon className="size-7" width={3}>
                            <path d="M3 4v10h10M4 13C14 0 37 6 37 21c0 15-18 20-27 12" />
                        </Icon>
                    </button>
                </div>
                <div className="grid grid-cols-[1fr_100px_1fr] gap-3.5">
                    <div className="flex flex-col gap-4">
                        <RadiusInput label="Top left radius" />
                        <RadiusInput label="Bottom left radius" />
                    </div>
                    <Corners />
                    <div className="flex flex-col gap-4">
                        <RadiusInput label="Top right radius" />
                        <RadiusInput label="Bottom right radius" />
                    </div>
                </div>
                <div className="mt-2 grid grid-cols-2 gap-x-6 gap-y-2">
                    <Field label="Border Width" />
                    <Field label="Elevation" />
                    <Field label="Min W" units />
                    <Field label="Min H" units />
                    <Field label="Max W" units />
                    <Field label="Max H" units />
                </div>
                <div className={`mt-4 mb-5.5 flex h-[50px] items-center text-[25px] ${muted}`}>
                    Clip Content
                    <InfoIcon className="ml-2.5" />
                    <span className="ml-auto flex"><Switch label="Clip Content" /></span>
                </div>
            </div>
            <Section title="Box Shadow" toggle />
            <Section title="Gradient" toggle />
            <Section title="Background Image" />
            <Section title="Child" open />
        </div>
    </aside>
);

const Section = ({ title, toggle, open }: { title: string; toggle?: boolean; open?: boolean }) => (
    <div className={`flex items-center border-t-2 border-[#323843] px-6 text-[26px] font-bold ${toggle ? "h-[94px]" : "h-[78px]"}`}>
        {title}
        <InfoIcon className="ml-1.5" />
        {toggle ? (
            <span className={`ml-auto flex items-center gap-4.5 ${muted}`}>
                <button aria-label={`Copy ${title}`}><CopyIcon /></button>
                <button aria-label={`Bind ${title}`}><WidgetDotIcon className="size-[30px]" /></button>
                <Switch label={title} />
            </span>
        ) : (
            <button aria-label={`Expand ${title}`} className={`mr-1.5 ml-auto ${muted}`}>
                {open ? <ChevronDown className="size-7" /> : <ChevronRight className="size-7" />}
            </button>
        )}
    </div>
);

export default function App() {
    return (
        <div className="relative flex h-screen flex-col overflow-hidden bg-[#14181b] font-['Lato',sans-serif] text-white">
            <Header />
            <div className="flex min-h-0 flex-1">
                <Rail />
                <TreePanel />
                <div className="flex w-5 shrink-0 items-center justify-center bg-[#282c36] shadow-lg">
                    <span className="h-15 w-2.5 rounded-full bg-[#9ea7b6]" />
                </div>
                <Canvas />
                <PropertiesPanel />
            </div>
            <button aria-label="Open chat" className="absolute right-10 bottom-10 flex size-24 items-center justify-center rounded-full bg-[#4b39e6] shadow-xl">
                <svg viewBox="0 0 44 50" className="h-12 w-11" aria-hidden="true">
                    <path d="M5 0h34q4 0 4 4v45l-12-5H5q-4 0-4-4V4q0-4 4-4z" fill="#fff" />
                    <path d="M8 32q14 10 28 0" fill="none" stroke="#4b39e6" strokeWidth={2.5} strokeLinecap="round" />
                </svg>
            </button>
        </div>
    );
}
